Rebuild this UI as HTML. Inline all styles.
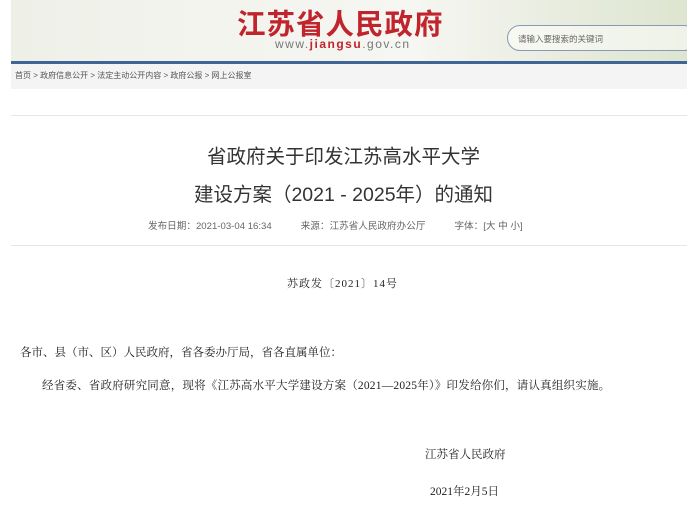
<!DOCTYPE html>
<html><head><meta charset="utf-8"><style>
body{margin:0;width:687px;height:510px;background:#fff;overflow:hidden;position:relative;font-family:"Liberation Sans","Noto Sans CJK SC",sans-serif;color:#333}
.hd{position:absolute;left:11px;top:0;width:676px;height:61px;background:linear-gradient(90deg,#eef0e8,#f3f4ee 30%,#f6f6f2 60%,#e6ebdc 85%,#dde5d0)}
.bl{position:absolute;left:11px;top:61px;width:676px;height:3px;background:#3f6596}
.bc{position:absolute;left:11px;top:64px;width:676px;height:25px;background:#f4f4f4;font-size:8px;line-height:23px;color:#555;padding-left:4px;box-sizing:border-box}
.logo{position:absolute;left:237px;top:2px;font-size:28.5px;font-weight:bold;color:#c0242c;letter-spacing:1px;font-family:"Noto Sans CJK SC",sans-serif}
.url{position:absolute;left:275px;top:37px;font-size:12px;color:#777;letter-spacing:1.5px}
.url b{color:#c0242c}
.srch{position:absolute;left:507px;top:25px;width:190px;height:26px;border:1px solid #8a9ab0;border-radius:14px;background:rgba(255,255,255,.5);font-size:8.5px;line-height:26px;padding-left:10px;color:#666;box-sizing:border-box}
.ln{position:absolute;left:11px;width:676px;height:1px;background:#e6e6e6}
.t{position:absolute;left:0;width:687px;text-align:center;font-size:19.5px;color:#333}
.c{position:absolute;font-family:"Liberation Serif","Noto Serif CJK SC",serif;font-size:11.5px;color:#222;white-space:nowrap}
</style></head><body>
<div class="hd"></div>
<div class="logo">江苏省人民政府</div>
<div class="url">www.<b>jiangsu</b>.gov.cn</div>
<div class="srch">请输入要搜索的关键词</div>
<div class="bl"></div>
<div class="bc">首页 &gt; 政府信息公开 &gt; 法定主动公开内容 &gt; 政府公报 &gt; 网上公报室</div>
<div class="ln" style="top:115px"></div>
<div class="t" style="top:140px">省政府关于印发江苏高水平大学</div>
<div class="t" style="top:178px">建设方案（2021 - 2025年）的通知</div>
<div style="position:absolute;top:218px;left:148px;font-size:9.6px;color:#666;white-space:nowrap">发布日期：2021-03-04 16:34<span style="margin-left:29px">来源：江苏省人民政府办公厅</span><span style="margin-left:29px">字体：[大 中 小]</span></div>
<div class="ln" style="top:245px"></div>
<div class="c" style="left:287px;top:275px;font-size:11px;letter-spacing:1px">苏政发〔2021〕14号</div>
<div class="c" style="left:20px;top:344px">各市、县（市、区）人民政府，省各委办厅局，省各直属单位：</div>
<div class="c" style="left:42px;top:377px;letter-spacing:0.2px">经省委、省政府研究同意，现将《江苏高水平大学建设方案（2021—2025年）》印发给你们，请认真组织实施。</div>
<div class="c" style="left:425px;top:446px">江苏省人民政府</div>
<div class="c" style="left:430px;top:483px">2021年2月5日</div>
</body></html>
